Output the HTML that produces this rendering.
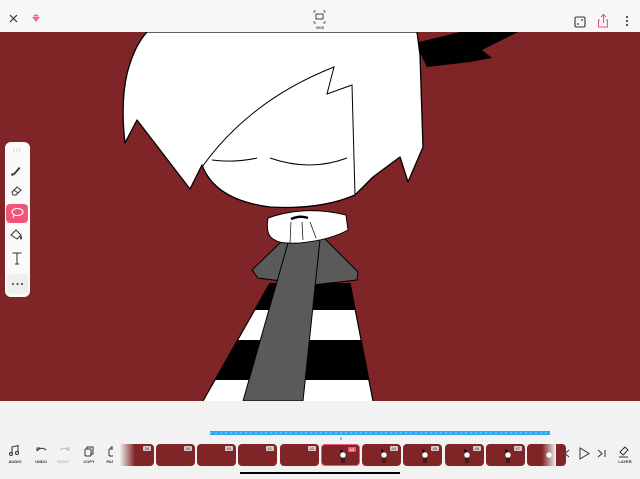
<!DOCTYPE html>
<html><head><meta charset="utf-8"><style>
*{margin:0;padding:0;box-sizing:border-box}
body{width:640px;height:479px;overflow:hidden;background:#f2f2f2;font-family:"Liberation Sans",sans-serif;position:relative}
.top{position:absolute;left:0;top:0;width:640px;height:32px;background:#f7f7f7}
.canvas{position:absolute;left:0;top:32px;width:640px;height:369px;background:#7f2527;overflow:hidden}
.th{position:absolute;top:444px;width:39px;height:22px;background:#7f2527;border-radius:4px}
.th span{position:absolute;right:3px;top:2px;font-size:4px;background:#d9c9c9;color:#333;padding:0 2px;border-radius:1px;line-height:5px}
</style></head><body>
<div class="top">
<svg width="640" height="32" style="position:absolute;left:0;top:0">
<path d="M10 15l7 7M17 15l-7 7" stroke="#333" stroke-width="1.2"/>
<path d="M32 17h8l-4 5z" fill="#f06a8a"/><path d="M33 16.5l1.5-2h3l1.5 2z" fill="#f06a8a"/>
<rect x="316" y="14" width="7" height="5" fill="none" stroke="#444" stroke-width="1"/>
<path d="M314 13v-2h2M325 13v-2h-2M314 21v2h2M325 21v2h-2" fill="none" stroke="#444" stroke-width=".8"/>
<text x="320" y="29" font-size="3.5" text-anchor="middle" fill="#555" font-weight="bold">HIDE</text>
<rect x="575" y="17" width="10" height="10" rx="1.5" fill="none" stroke="#333" stroke-width="1.1"/><circle cx="578" cy="24" r=".9" fill="#333"/><circle cx="582" cy="20" r=".9" fill="#333"/>
<path d="M600 20h-1.5v7h9v-7h-1.5M603.5 23v-8M601 17l2.5-2.5 2.5 2.5" fill="none" stroke="#f05080" stroke-width="1.1"/>
<circle cx="627" cy="17" r="1.1" fill="#444"/><circle cx="627" cy="21" r="1.1" fill="#444"/><circle cx="627" cy="25" r="1.1" fill="#444"/>
</svg></div>
<div class="canvas">
<svg width="640" height="369" viewBox="0 32 640 369" style="position:absolute;left:0;top:0">
<defs><clipPath id="b"><path d="M270 283L350 283L373 401L203 401Z"/></clipPath></defs>
<path d="M415 43L460 32L518 32L482 50L492 58L470 62L427 67Z" fill="#000"/>
<g clip-path="url(#b)">
<rect x="190" y="280" width="200" height="130" fill="#fff"/>
<rect x="190" y="280" width="200" height="30" fill="#000"/>
<rect x="190" y="340" width="200" height="40" fill="#000"/>
</g>
<path d="M270 283L203 401M350 283L373 401" stroke="#000" stroke-width="1.2"/>
<path d="M280 243L323 237L358 272L357 280L312 285L258 278L252 270Z" fill="#5a5a5a" stroke="#000" stroke-width="1"/>
<path d="M288 243L320 240L303 401L243 401Z" fill="#5a5a5a" stroke="#000" stroke-width="1"/>
<path d="M268 218Q305 205 346 215L348 230Q330 240 300 243Q280 244 275 240Q265 236 268 218Z" fill="#fff" stroke="#000" stroke-width="1"/>
<path d="M291 222L290 243M302 222L303 240M310 222L316 238" stroke="#000" stroke-width=".7"/>
<path d="M291 219Q300 215 308 218" stroke="#000" stroke-width="2.5" fill="none"/>
<path d="M147 32L417 32L420 55L423 147L408 182L400 157L373 177L355 195Q320 210 270 207Q215 200 202 165L190 189L137 120L125 143Q120 100 128 70Q135 45 147 32Z" fill="#fff" stroke="#000" stroke-width="1.3" stroke-linejoin="round"/>
<path d="M202 167Q250 100 334 67L327 94L352 85L355 195" fill="none" stroke="#000" stroke-width="1"/>
<path d="M212 160Q235 163 257 158M270 158Q310 172 347 158" fill="none" stroke="#000" stroke-width="1.1"/>
</svg>
</div>
<svg width="640" height="479" style="position:absolute;left:0;top:0">
<rect x="5" y="142" width="25" height="155" rx="6" fill="#fafafa"/>
<g fill="#999"><circle cx="14" cy="149" r=".5"/><circle cx="17" cy="149" r=".5"/><circle cx="20" cy="149" r=".5"/><circle cx="14" cy="151" r=".5"/><circle cx="17" cy="151" r=".5"/><circle cx="20" cy="151" r=".5"/></g>
<path d="M13 174l6-7 1.5 1-6 7z" fill="#333"/><circle cx="12.5" cy="174.5" r="1.3" fill="#333"/>
<path d="M12 192l5-5 4 3-5 5h-3zM14 190l4 3" fill="none" stroke="#333" stroke-width="1"/>
<rect x="6" y="204" width="22" height="19" rx="4" fill="#f0557a"/>
<ellipse cx="17.5" cy="212" rx="5.5" ry="3.5" fill="none" stroke="#fff" stroke-width="1.1"/><path d="M14 215l-1 3" stroke="#fff" stroke-width="1"/>
<path d="M11 235l5-5 5 5-4 4z M21 236q1 3 0 3q-1 0 0-3" fill="none" stroke="#333" stroke-width="1"/>
<path d="M12.5 253h9M17 253v11M15 264h4" stroke="#333" stroke-width="1"/>
<rect x="7" y="274" width="21" height="20" rx="4" fill="#eee"/>
<g fill="#333"><circle cx="13" cy="284" r="1"/><circle cx="17.5" cy="284" r="1"/><circle cx="22" cy="284" r="1"/></g>
<path d="M210 433h340" stroke="#2aa8f2" stroke-width="4"/>
<path d="M210 433h340" stroke="#6cc3f6" stroke-width="1.5" stroke-dasharray="2 3"/>
<path d="M341 437v3" stroke="#1a9ff0" stroke-width="1"/>
<g fill="none" stroke="#333" stroke-width="1">
<path d="M12 454v-7l6-1.5v7"/><circle cx="11" cy="454" r="1.5"/><circle cx="17" cy="453" r="1.5"/>
<path d="M37 451q4-5 9-1M37 451v-3h3"/>
<path d="M69 451q-4-5-9-1M69 451v-3h-3" stroke="#bbb"/>
<rect x="85" y="449" width="6" height="7" rx="1"/><path d="M87 449v-2h6v7h-2"/>
<rect x="109" y="449" width="6" height="7" rx="1"/><path d="M111 449v-2h6v7h-2"/>
<path d="M562 450v7M569 450l-4 3.5 4 3.5"/>
<path d="M580 448v11l9-5.5z"/>
<path d="M605 450v7M598 450l4 3.5-4 3.5"/>
<path d="M620 452l5-5 3 3-5 5zM619 457h9"/>
</g>
<g font-size="4" font-weight="bold" fill="#333" text-anchor="middle">
<text x="15" y="463">AUDIO</text><text x="41" y="463">UNDO</text><text x="63" y="463" fill="#bbb">REDO</text><text x="89" y="463">COPY</text><text x="113" y="463">PASTE</text><text x="625" y="463">LAYER</text>
</g>
<path d="M240 473h160" stroke="#000" stroke-width="2"/>
</svg>
<div class="th" style="left:115px"><span>38</span></div>
<div class="th" style="left:156px"><span>39</span></div>
<div class="th" style="left:197px"><span>40</span></div>
<div class="th" style="left:238px"><span>41</span></div>
<div class="th" style="left:280px"><span>42</span></div>
<div class="th" style="left:321px;border:1px solid #f0557a"><span style="background:#f0557a;color:#fff">43</span></div>
<div class="th" style="left:362px"><span>44</span></div>
<div class="th" style="left:403px"><span>45</span></div>
<div class="th" style="left:445px"><span>46</span></div>
<div class="th" style="left:486px"><span>47</span></div>
<div class="th" style="left:527px"></div>
<svg width="640" height="479" style="position:absolute;left:0;top:0">
<defs><linearGradient id="f2" x1="0" x2="1"><stop offset="0.3" stop-color="#f2f2f2"/><stop offset="1" stop-color="#f2f2f2" stop-opacity="0"/></linearGradient>
<linearGradient id="f3" x1="1" x2="0"><stop offset="0" stop-color="#f2f2f2"/><stop offset="1" stop-color="#f2f2f2" stop-opacity="0"/></linearGradient></defs>
<g fill="#fff" stroke="#000" stroke-width=".4">
<circle cx="343" cy="455" r="3"/><circle cx="384" cy="455" r="3"/><circle cx="425" cy="455" r="3"/><circle cx="467" cy="455" r="3"/><circle cx="508" cy="455" r="3"/><circle cx="549" cy="455" r="3"/>
</g>
<g fill="#000"><path d="M340 449l1 4 2-2zM381 449l1 4 2-2zM422 449l1 4 2-2zM464 449l1 4 2-2zM505 449l1 4 2-2z"/></g>
<g stroke="#000" stroke-width=".8"><path d="M342 458v5M344 458v5M383 458v5M385 458v5M424 458v5M426 458v5M466 458v5M468 458v5M507 458v5M509 458v5"/></g>
<rect x="113" y="440" width="22" height="30" fill="url(#f2)"/>
<rect x="542" y="440" width="14" height="30" fill="url(#f3)"/>
</svg>
</body></html>
